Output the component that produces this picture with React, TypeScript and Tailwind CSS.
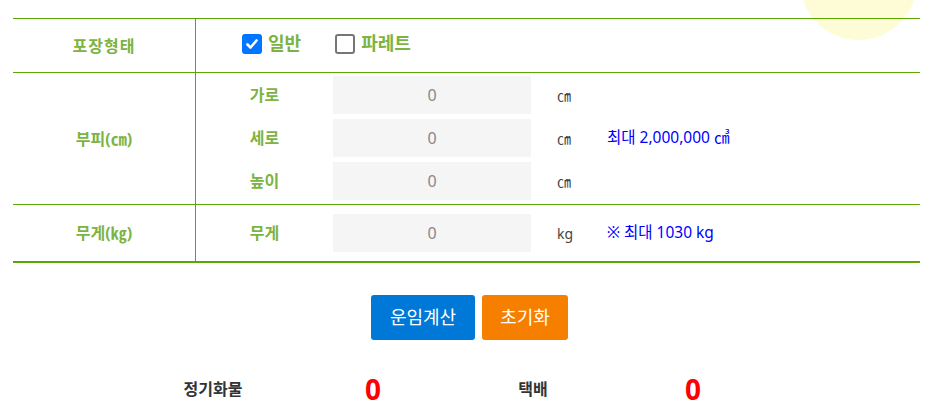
import React from "react";

const G = "text-[#7cb342]";

function SubRow({ label, unit, note }: { label: string; unit: string; note?: string }) {
  return (
    <div className="flex items-center h-[38px]">
      <div className={`w-[137px] text-center text-[16px] font-bold ${G}`}>{label}</div>
      <div className="w-[198px] h-[38px] bg-[#f5f5f5] flex items-center justify-center text-[16px] text-[#888]">0</div>
      <div className="w-[50px] pl-[26px] text-[14px] text-[#444] whitespace-nowrap">{unit}</div>
      {note && <div className="pl-[26px] text-[15.5px] text-[#0000ff] whitespace-nowrap">{note}</div>}
    </div>
  );
}

export default function App() {
  return (
    <div
      className="relative w-[933px] h-[418px] overflow-hidden bg-white"
      style={{ fontFamily: '"Noto Sans", "Noto Sans CJK KR", sans-serif' }}
    >
      <div className="absolute left-[800px] top-[-77px] w-[117px] h-[117px] rounded-full bg-[#fefcd7]" />
      <div className="relative pt-[18px] px-[13px]">
        <div className="border-t border-[#5aa700]">
          {/* row 1 */}
          <div className="flex h-[54px] border-b border-[#5aa700]">
            <div className={`w-[183px] border-r border-[#5aa700] flex items-center justify-center text-[16px] tracking-[1px] font-bold ${G}`}>
              포장형태
            </div>
            <div className="flex items-center pl-[46px] pb-[4px]">
              <label className="flex items-center gap-[6px]">
                <span className="w-[20px] h-[20px] rounded-[3px] bg-[#0075ff] flex items-center justify-center">
                  <svg width="14" height="14" viewBox="0 0 14 14">
                    <path d="M2.5 7.5 L5.5 10.5 L11.5 3.5" stroke="white" strokeWidth="2.6" fill="none" strokeLinecap="round" strokeLinejoin="round" />
                  </svg>
                </span>
                <span className={`text-[18px] font-bold ${G}`}>일반</span>
              </label>
              <label className="flex items-center gap-[6px] ml-[34px]">
                <span className="w-[20px] h-[20px] rounded-[3px] border-2 border-[#767676] bg-white" />
                <span className={`text-[18px] font-bold ${G}`}>파레트</span>
              </label>
            </div>
          </div>
          {/* row 2 */}
          <div className="flex h-[132px] border-b border-[#5aa700]">
            <div className={`w-[183px] border-r border-[#5aa700] flex items-center justify-center text-[16px] font-bold ${G}`}>
              부피(㎝)
            </div>
            <div className="flex flex-col pt-[3px] gap-[5px]">
              <SubRow label="가로" unit="㎝" />
              <SubRow label="세로" unit="㎝" note="최대 2,000,000 ㎤" />
              <SubRow label="높이" unit="㎝" />
            </div>
          </div>
          {/* row 3 */}
          <div className="flex h-[58px] border-b-2 border-[#5aa700]">
            <div className={`w-[183px] border-r border-[#5aa700] flex items-center justify-center text-[16px] font-bold ${G}`}>
              무게(㎏)
            </div>
            <div className="flex items-center">
              <SubRow label="무게" unit="kg" note="※ 최대 1030 kg" />
            </div>
          </div>
        </div>
      </div>
      {/* buttons */}
      <div className="flex justify-center gap-[7px] mt-[32px] pl-[6px]">
        <button className="w-[104px] h-[45px] rounded-[3px] bg-[#0078d7] text-white text-[18px]">운임계산</button>
        <button className="w-[86px] h-[45px] rounded-[3px] bg-[#f77f00] text-white text-[18px]">초기화</button>
      </div>
      {/* results */}
      <div className="flex ml-[133px] mt-[35px] items-center">
        <div className="w-[160px] text-center text-[16px] font-bold text-[#333]">정기화물</div>
        <div className="w-[160px] text-center text-[28px] font-bold text-[#ff0000] leading-none">0</div>
        <div className="w-[160px] text-center text-[16px] font-bold text-[#333]">택배</div>
        <div className="w-[160px] text-center text-[28px] font-bold text-[#ff0000] leading-none">0</div>
      </div>
    </div>
  );
}
